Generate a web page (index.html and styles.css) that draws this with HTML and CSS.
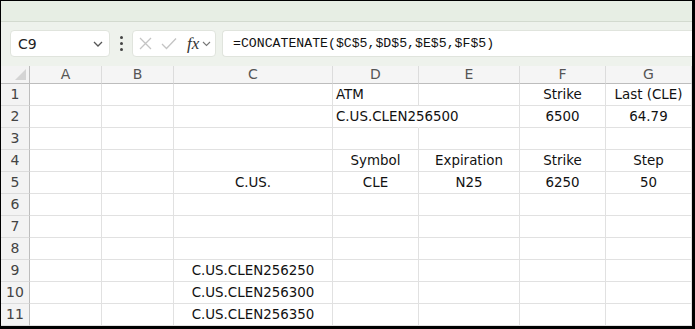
FILE: index.html
```html
<!DOCTYPE html>
<html lang="en">
<head>
  <meta charset="UTF-8">
  <title>Sheet1</title>
  <link rel="stylesheet" href="styles.css">
</head>
<body>
  <div class="window">
    <div class="ribbon-edge"></div>

    <div class="formula-bar">
      <div class="name-box">
        <span>C9</span>
        <svg class="chev" width="10" height="6" viewBox="0 0 10 6"><path d="M1 1 L5 5 L9 1" fill="none" stroke="#555" stroke-width="1.3"/></svg>
      </div>
      <div class="grip"><i></i><i></i><i></i></div>
      <div class="fx-box">
        <svg width="13" height="13" viewBox="0 0 13 13"><path d="M1 1 L12 12 M12 1 L1 12" stroke="#c4c4c4" stroke-width="1.3"/></svg>
        <svg width="16" height="13" viewBox="0 0 16 13"><path d="M1 7 L5.5 11.5 L15 1.5" fill="none" stroke="#c4c4c4" stroke-width="1.3"/></svg>
        <span class="fx">fx</span>
        <svg width="9" height="6" viewBox="0 0 9 6"><path d="M1 1 L4.5 4.5 L8 1" fill="none" stroke="#777" stroke-width="1.1"/></svg>
      </div>
      <div class="formula">=CONCATENATE($C$5,$D$5,$E$5,$F$5)</div>
    </div>

    <div class="sheet">
      <div class="corner"><span class="tri"></span></div>
      <div class="col-head">A</div>
      <div class="col-head">B</div>
      <div class="col-head">C</div>
      <div class="col-head">D</div>
      <div class="col-head">E</div>
      <div class="col-head">F</div>
      <div class="col-head">G</div>

      <div class="row-head">1</div>
      <div class="cell"></div><div class="cell"></div><div class="cell"></div>
      <div class="cell">ATM</div><div class="cell"></div>
      <div class="cell mid">Strike</div><div class="cell mid">Last (CLE)</div>

      <div class="row-head">2</div>
      <div class="cell"></div><div class="cell"></div><div class="cell"></div>
      <div class="cell spill">C.US.CLEN256500</div><div class="cell"></div>
      <div class="cell mid">6500</div><div class="cell mid">64.79</div>

      <div class="row-head">3</div>
      <div class="cell"></div><div class="cell"></div><div class="cell"></div>
      <div class="cell"></div><div class="cell"></div>
      <div class="cell"></div><div class="cell"></div>

      <div class="row-head">4</div>
      <div class="cell"></div><div class="cell"></div><div class="cell"></div>
      <div class="cell mid">Symbol</div><div class="cell mid">Expiration</div>
      <div class="cell mid">Strike</div><div class="cell mid">Step</div>

      <div class="row-head">5</div>
      <div class="cell"></div><div class="cell"></div><div class="cell mid">C.US.</div>
      <div class="cell mid">CLE</div><div class="cell mid">N25</div>
      <div class="cell mid">6250</div><div class="cell mid">50</div>

      <div class="row-head">6</div>
      <div class="cell"></div><div class="cell"></div><div class="cell"></div>
      <div class="cell"></div><div class="cell"></div>
      <div class="cell"></div><div class="cell"></div>

      <div class="row-head">7</div>
      <div class="cell"></div><div class="cell"></div><div class="cell"></div>
      <div class="cell"></div><div class="cell"></div>
      <div class="cell"></div><div class="cell"></div>

      <div class="row-head">8</div>
      <div class="cell"></div><div class="cell"></div><div class="cell"></div>
      <div class="cell"></div><div class="cell"></div>
      <div class="cell"></div><div class="cell"></div>

      <div class="row-head">9</div>
      <div class="cell"></div><div class="cell"></div><div class="cell mid">C.US.CLEN256250</div>
      <div class="cell"></div><div class="cell"></div>
      <div class="cell"></div><div class="cell"></div>

      <div class="row-head">10</div>
      <div class="cell"></div><div class="cell"></div><div class="cell mid">C.US.CLEN256300</div>
      <div class="cell"></div><div class="cell"></div>
      <div class="cell"></div><div class="cell"></div>

      <div class="row-head">11</div>
      <div class="cell"></div><div class="cell"></div><div class="cell mid">C.US.CLEN256350</div>
      <div class="cell"></div><div class="cell"></div>
      <div class="cell"></div><div class="cell"></div>
    </div>
  </div>
</body>
</html>
```

FILE: styles.css
```css
* {
  box-sizing: border-box;
}

body {
  margin: 0;
  font-family: "DejaVu Sans", "Liberation Sans", sans-serif;
  background-color: #fff;
}

.window {
  width: 695px;
  height: 329px;
  border-left: 1px solid #000;
  border-top: 1px solid #000;
  border-right: 3px solid #000;
  border-bottom: 3px solid #000;
  overflow: hidden;
}

.ribbon-edge {
  height: 21px;
  background-color: #e7eee4;
  border-bottom: 1px solid #d3dacf;
}

.formula-bar {
  display: flex;
  align-items: center;
  height: 44px;
  padding: 8px 0 9px 9px;
  background-color: #eef2ec;
}

.name-box {
  display: flex;
  align-items: center;
  justify-content: space-between;
  width: 100px;
  height: 27px;
  padding: 0 6px 0 7px;
  background-color: #fff;
  border: 1px solid #e0e4dd;
  border-radius: 4px;
  font-size: 14px;
  color: #222;
}

.name-box .chev {
  margin-top: 1px;
}

.grip {
  display: flex;
  flex-direction: column;
  gap: 3px;
  width: 22px;
  align-items: center;
}

.grip i {
  width: 3px;
  height: 3px;
  border-radius: 50%;
  background-color: #444;
}

.fx-box {
  display: flex;
  align-items: center;
  width: 84px;
  height: 27px;
  padding-left: 6px;
  background-color: #fff;
  border: 1px solid #e0e4dd;
  border-radius: 4px;
}

.fx-box svg:first-child {
  margin-right: 9px;
}

.fx {
  margin: 0 3px 0 10px;
  font-family: "Liberation Serif", serif;
  font-style: italic;
  font-size: 17px;
  color: #333;
}

.formula {
  flex: 1;
  height: 27px;
  margin-left: 6px;
  padding-left: 10px;
  line-height: 25px;
  background-color: #fff;
  border: 1px solid #e0e4dd;
  border-right: none;
  border-radius: 4px 0 0 4px;
  font-family: "Liberation Mono", monospace;
  font-size: 13.2px;
  color: #111;
}

.sheet {
  display: grid;
  grid-template-columns: 29px 72px 72px 159px 86px 101px 86px 86px;
  grid-template-rows: 18px;
  grid-auto-rows: 22px;
  font-size: 13.4px;
}

.corner {
  position: relative;
  background-color: #f3f3f3;
  border-right: 1px solid #bdbdbd;
  border-bottom: 1px solid #bdbdbd;
}

.corner .tri {
  position: absolute;
  right: 3px;
  bottom: 3px;
  width: 0;
  height: 0;
  border-left: 11px solid transparent;
  border-bottom: 11px solid #d4d4d4;
}

.col-head {
  background-color: #f5f5f5;
  border-right: 1px solid #dcdcdc;
  border-bottom: 1px solid #bdbdbd;
  text-align: center;
  line-height: 17px;
  font-size: 14px;
  color: #555;
}

.row-head {
  background-color: #f3f3f3;
  border-right: 1px solid #bdbdbd;
  border-bottom: 1px solid #dcdcdc;
  text-align: center;
  line-height: 21px;
  font-size: 14px;
  color: #444;
}

.cell {
  border-right: 1px solid #e1e1e1;
  border-bottom: 1px solid #e1e1e1;
  padding: 0 3px;
  line-height: 21px;
  white-space: nowrap;
  color: #111;
}

.cell.mid {
  text-align: center;
}

.cell.spill {
  overflow: visible;
  border-right-color: transparent;
}
```
